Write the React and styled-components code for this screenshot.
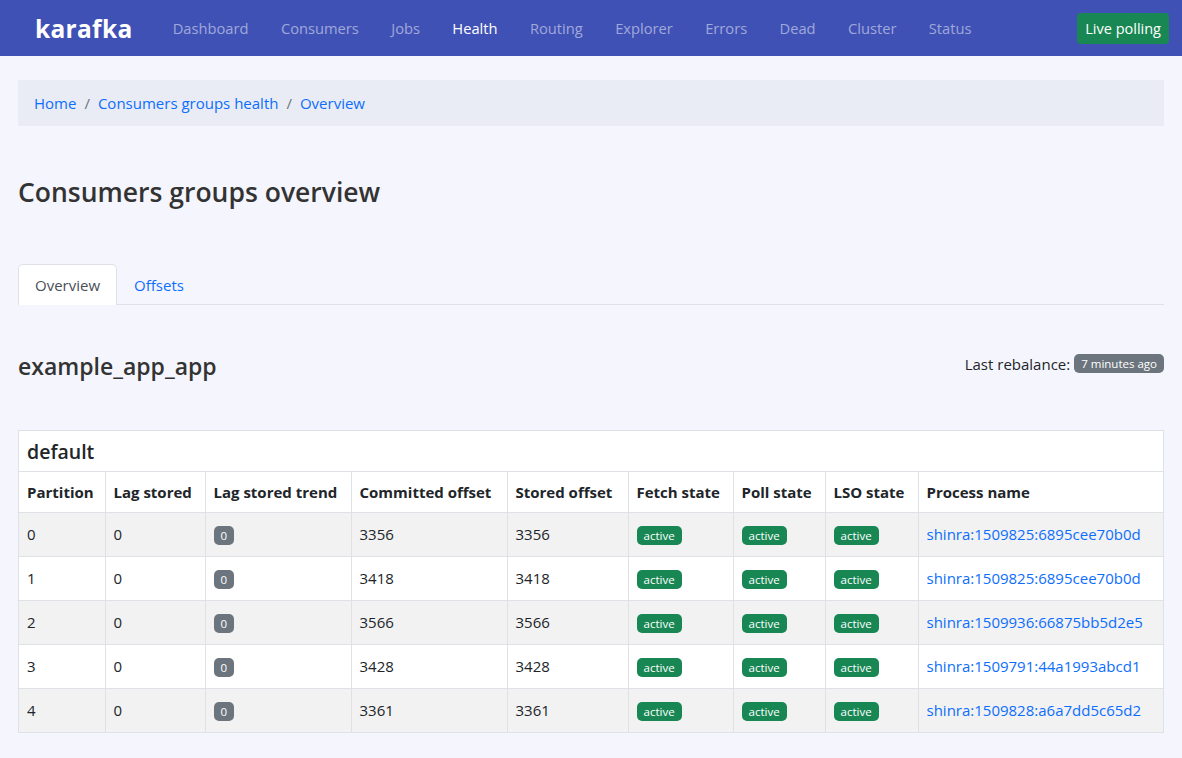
import React from 'react';
import styled, { createGlobalStyle } from 'styled-components';

const GlobalStyle = createGlobalStyle`
  * { box-sizing: border-box; }
  body {
    margin: 0;
    background: #f5f6fd;
    font-family: "Open Sans", "Noto Sans", sans-serif;
    font-size: 15px;
    color: #212529;
  }
`;

const Navbar = styled.nav`
  height: 56px;
  background: #3f51b5;
  display: flex;
  align-items: center;
  padding: 0 13px 0 35px;
`;

const Brand = styled.a`
  color: #fff;
  font-weight: 700;
  font-size: 24.5px;
  margin-right: 24px;
  letter-spacing: 0.3px;
`;

const NavList = styled.div`
  display: flex;
  flex: 1;
`;

const NavLink = styled.a`
  color: ${(p) => (p.active ? '#fff' : 'rgba(255,255,255,0.5)')};
  font-size: 14.7px;
  padding: 0 16.2px;
`;

const LiveButton = styled.button`
  background: #198754;
  color: #fff;
  border: none;
  border-radius: 4px;
  font-family: inherit;
  font-size: 14.5px;
  padding: 0 8px;
  height: 31px;
`;

const Container = styled.main`
  padding: 24px 18px;
`;

const Breadcrumb = styled.div`
  background: #e9ecf4;
  height: 46px;
  display: flex;
  align-items: center;
  padding: 0 16px;
  gap: 8px;
`;

const Crumb = styled.a`
  color: #0d6efd;
`;

const Sep = styled.span`
  color: #6c757d;
`;

const Title = styled.h1`
  font-size: 26.5px;
  font-weight: 600;
  color: #333;
  margin: 48px 0 54px;
`;

const Tabs = styled.div`
  display: flex;
  border-bottom: 1px solid #dee2e6;
  height: 41px;
`;

const Tab = styled.a`
  padding: 0 16px;
  display: flex;
  align-items: center;
  color: ${(p) => (p.active ? '#495057' : '#0d6efd')};
  background: ${(p) => (p.active ? '#fff' : 'transparent')};
  border: 1px solid ${(p) => (p.active ? '#dee2e6' : 'transparent')};
  border-bottom: none;
  border-radius: 5px 5px 0 0;
  margin-bottom: -1px;
`;

const SectionHead = styled.div`
  display: flex;
  justify-content: space-between;
  align-items: center;
  margin: 45px 0 48px;
`;

const GroupName = styled.h2`
  font-size: 23px;
  font-weight: 600;
  color: #333;
  margin: 0;
`;

const Rebalance = styled.div`
  display: flex;
  align-items: center;
  gap: 4px;
  margin-top: -5px;
`;

const Badge = styled.span`
  display: inline-block;
  background: ${(p) => p.bg};
  color: #fff;
  font-size: 11.5px;
  border-radius: 5px;
  padding: 2px 7px;
  line-height: 15px;
`;

const Card = styled.div`
  background: #fff;
  border: 1px solid #dee2e6;
`;

const CardTitle = styled.div`
  height: 41px;
  display: flex;
  align-items: center;
  padding: 0 8px;
  font-size: 19.5px;
  font-weight: 600;
  color: #212529;
  border-bottom: 1px solid #dee2e6;
`;

const Table = styled.table`
  width: 100%;
  border-collapse: collapse;
`;

const Th = styled.th`
  text-align: left;
  font-weight: 700;
  height: 40px;
  padding: 0 8px;
  border-right: 1px solid #dee2e6;
  width: ${(p) => p.w}px;
  &:last-child { border-right: none; }
`;

const Tr = styled.tr`
  background: ${(p) => (p.striped ? '#f2f2f2' : '#fff')};
  border-top: 1px solid #dee2e6;
`;

const Td = styled.td`
  height: 44px;
  padding: 0 8px;
  border-right: 1px solid #dee2e6;
  &:last-child { border-right: none; }
`;

const Link = styled.a`
  color: #0d6efd;
`;

const columns = [
  ['Partition', 86],
  ['Lag stored', 100],
  ['Lag stored trend', 146],
  ['Committed offset', 156],
  ['Stored offset', 121],
  ['Fetch state', 105],
  ['Poll state', 92],
  ['LSO state', 93],
  ['Process name'],
];

const rows = [
  [0, 3356, 'shinra:1509825:6895cee70b0d'],
  [1, 3418, 'shinra:1509825:6895cee70b0d'],
  [2, 3566, 'shinra:1509936:66875bb5d2e5'],
  [3, 3428, 'shinra:1509791:44a1993abcd1'],
  [4, 3361, 'shinra:1509828:a6a7dd5c65d2'],
];

const navItems = ['Dashboard', 'Consumers', 'Jobs', 'Health', 'Routing', 'Explorer', 'Errors', 'Dead', 'Cluster', 'Status'];

const App = () => {
  return (
    <>
      <GlobalStyle />
      <Navbar>
        <Brand>karafka</Brand>
        <NavList>
          {navItems.map((n) => (
            <NavLink key={n} active={n === 'Health'}>{n}</NavLink>
          ))}
        </NavList>
        <LiveButton>Live polling</LiveButton>
      </Navbar>
      <Container>
        <Breadcrumb>
          <Crumb>Home</Crumb>
          <Sep>/</Sep>
          <Crumb>Consumers groups health</Crumb>
          <Sep>/</Sep>
          <Crumb>Overview</Crumb>
        </Breadcrumb>
        <Title>Consumers groups overview</Title>
        <Tabs>
          <Tab active>Overview</Tab>
          <Tab>Offsets</Tab>
        </Tabs>
        <SectionHead>
          <GroupName>example_app_app</GroupName>
          <Rebalance>
            Last rebalance: <Badge bg="#6c757d">7 minutes ago</Badge>
          </Rebalance>
        </SectionHead>
        <Card>
          <CardTitle>default</CardTitle>
          <Table>
            <thead>
              <tr>
                {columns.map(([c, w]) => (
                  <Th key={c} w={w}>{c}</Th>
                ))}
              </tr>
            </thead>
            <tbody>
              {rows.map(([p, off, proc], i) => (
                <Tr key={p} striped={i % 2 === 0}>
                  <Td>{p}</Td>
                  <Td>0</Td>
                  <Td><Badge bg="#6c757d">0</Badge></Td>
                  <Td>{off}</Td>
                  <Td>{off}</Td>
                  <Td><Badge bg="#198754">active</Badge></Td>
                  <Td><Badge bg="#198754">active</Badge></Td>
                  <Td><Badge bg="#198754">active</Badge></Td>
                  <Td><Link>{proc}</Link></Td>
                </Tr>
              ))}
            </tbody>
          </Table>
        </Card>
      </Container>
    </>
  );
};

export default App;
